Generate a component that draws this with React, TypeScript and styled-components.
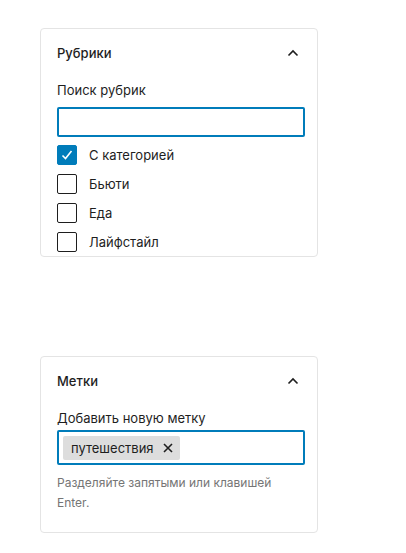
import styled, { createGlobalStyle } from 'styled-components'

const GlobalStyle = createGlobalStyle`
  body {
    margin: 0;
    background: #fff;
    font-family: Inter, "Noto Sans", sans-serif;
    color: #1e1e1e;
    -webkit-font-smoothing: antialiased;
  }
`

const Page = styled.div`
  display: flex;
  flex-direction: column;
  gap: 99px;
  padding: 28px 0 0 40px;
  width: 406px;
  height: 553px;
  box-sizing: border-box;
`

const Panel = styled.section`
  width: 278px;
  box-sizing: border-box;
  border: 1px solid #e4e4e4;
  border-radius: 4px;
  background: #fff;
`

const PanelHeader = styled.div`
  display: flex;
  align-items: center;
  justify-content: space-between;
  height: 47px;
  padding: 0 18px 0 16px;
  font-size: 13px;
  font-weight: 500;
`

const PanelBody = styled.div<{ $bottom: number }>`
  display: flex;
  flex-direction: column;
  padding: 4px 12px ${({ $bottom }) => $bottom}px 16px;
`

const FieldLabel = styled.label<{ $gap: number }>`
  font-size: 13px;
  line-height: 20px;
  margin-bottom: ${({ $gap }) => $gap}px;
`

const SearchInput = styled.input`
  height: 30px;
  box-sizing: border-box;
  border: 2px solid #007cba;
  border-radius: 2px;
  outline: none;
  margin: 0;
`

const CheckList = styled.ul`
  list-style: none;
  margin: 8px 0 0;
  padding: 0;
  display: flex;
  flex-direction: column;
  gap: 9px;
`

const CheckRow = styled.li`
  display: flex;
  align-items: center;
  gap: 12px;
  font-size: 13px;
  height: 20px;
`

const Box = styled.span<{ $checked?: boolean }>`
  width: 20px;
  height: 20px;
  box-sizing: border-box;
  border-radius: 2px;
  border: 1.5px solid ${({ $checked }) => ($checked ? '#007cba' : '#1e1e1e')};
  background: ${({ $checked }) => ($checked ? '#007cba' : '#fff')};
  display: flex;
  align-items: center;
  justify-content: center;
`

const TokenField = styled.div`
  height: 35px;
  box-sizing: border-box;
  border: 2px solid #007cba;
  border-radius: 2px;
  padding: 4px;
  display: flex;
  align-items: center;
`

const Token = styled.span`
  display: flex;
  align-items: center;
  gap: 8px;
  height: 24px;
  padding: 0 6px 0 8px;
  background: #ddd;
  border-radius: 2px;
  font-size: 13px;
`

const Help = styled.p`
  margin: 8px 0 0;
  font-size: 12px;
  line-height: 20px;
  color: #757575;
`

const Chevron = () => (
  <svg width="12" height="8" viewBox="0 0 12 8">
    <path d="M1.5 6.5 6 2l4.5 4.5" fill="none" stroke="#1e1e1e" strokeWidth="1.6" />
  </svg>
)

const Check = () => (
  <svg width="14" height="14" viewBox="0 0 14 14">
    <path d="M2.5 7.5 5.5 10.5 11.5 3" fill="none" stroke="#fff" strokeWidth="1.6" />
  </svg>
)

const Cross = () => (
  <svg width="12" height="12" viewBox="0 0 12 12">
    <path d="M2 2l8 8M10 2l-8 8" stroke="#1e1e1e" strokeWidth="1.6" />
  </svg>
)

const categories = [
  { name: 'С категорией', checked: true },
  { name: 'Бьюти' },
  { name: 'Еда' },
  { name: 'Лайфстайл' },
]

export default function App() {
  return (
    <Page>
      <GlobalStyle />
      <Panel>
        <PanelHeader>
          Рубрики
          <Chevron />
        </PanelHeader>
        <PanelBody $bottom={4}>
          <FieldLabel $gap={7}>Поиск рубрик</FieldLabel>
          <SearchInput />
          <CheckList>
            {categories.map(c => (
              <CheckRow key={c.name}>
                <Box $checked={c.checked}>{c.checked && <Check />}</Box>
                {c.name}
              </CheckRow>
            ))}
          </CheckList>
        </PanelBody>
      </Panel>
      <Panel>
        <PanelHeader>
          Метки
          <Chevron />
        </PanelHeader>
        <PanelBody $bottom={19}>
          <FieldLabel $gap={2}>Добавить новую метку</FieldLabel>
          <TokenField>
            <Token>
              путешествия
              <Cross />
            </Token>
          </TokenField>
          <Help>Разделяйте запятыми или клавишей Enter.</Help>
        </PanelBody>
      </Panel>
    </Page>
  )
}
